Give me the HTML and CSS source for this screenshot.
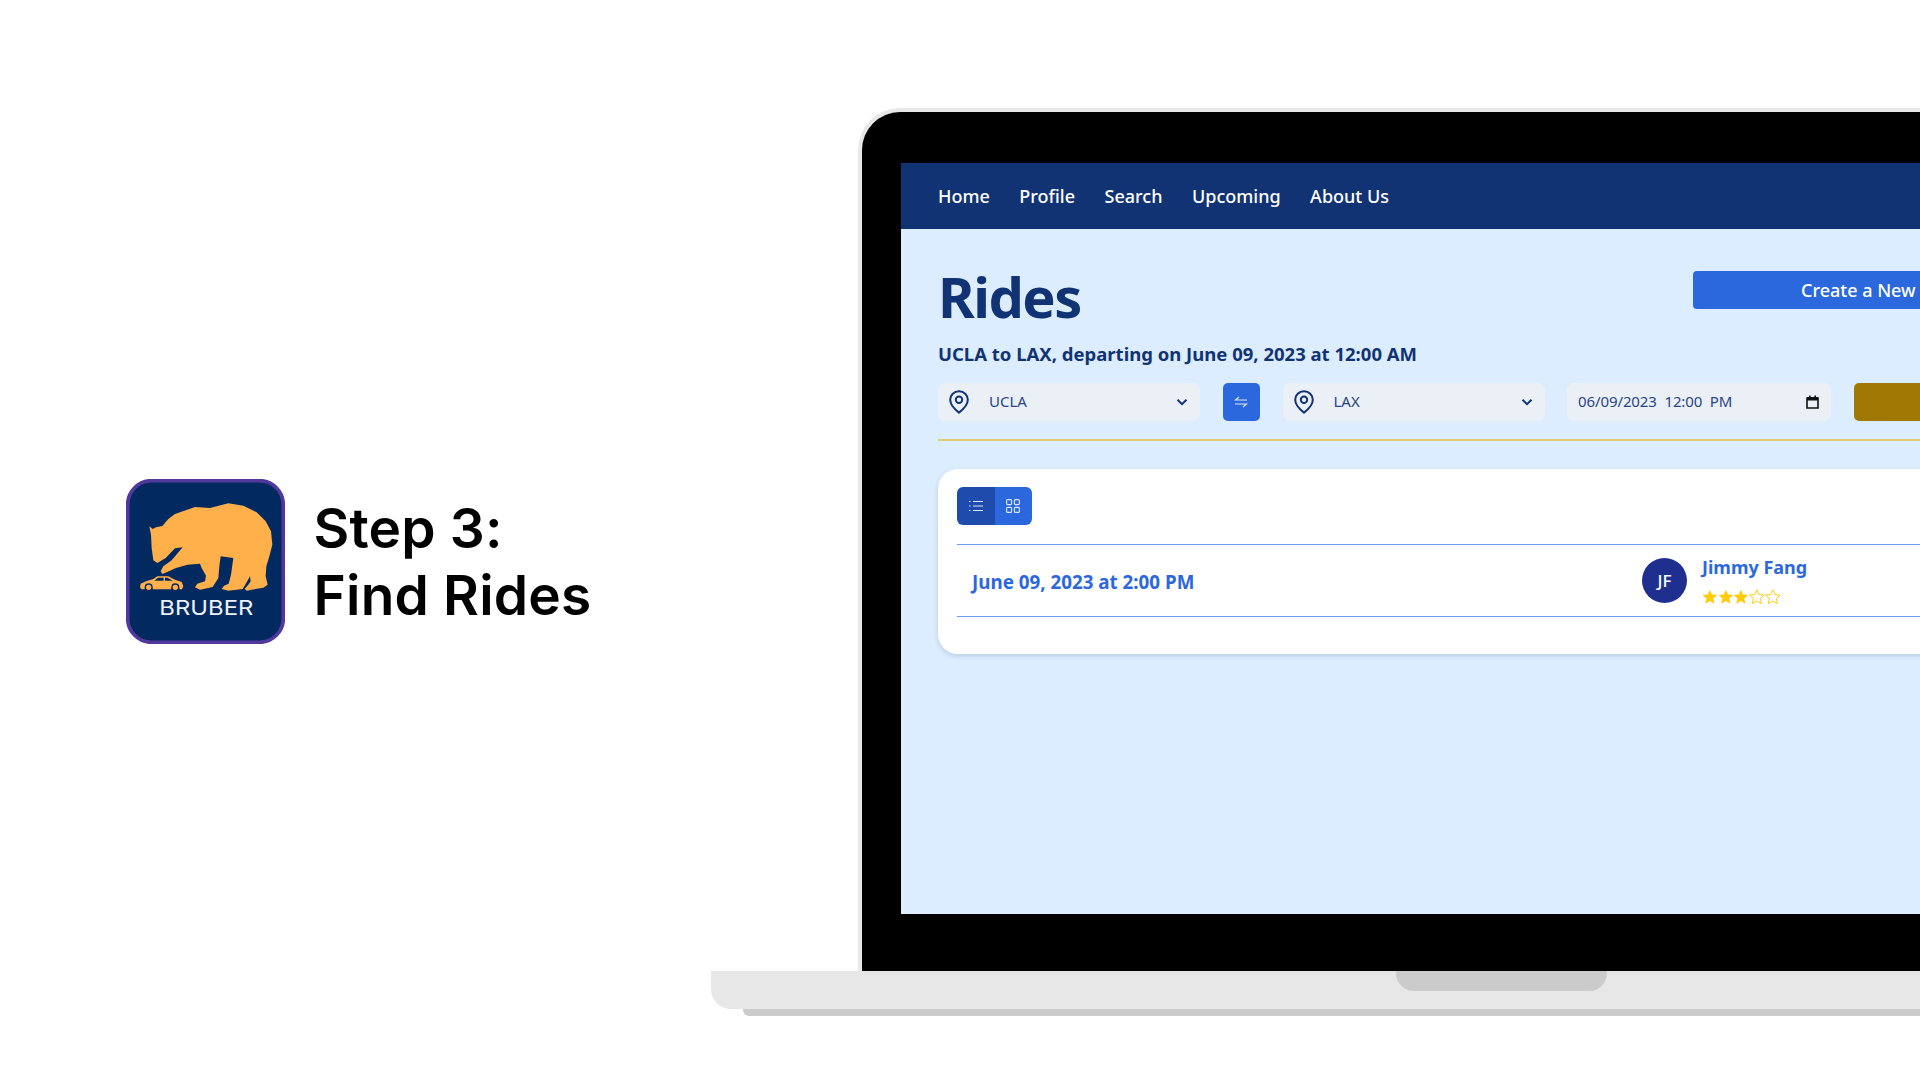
FILE: index.html
```html
<!DOCTYPE html>
<html lang="en">
<head>
<meta charset="utf-8">
<title>Bruber - Step 3</title>
<link rel="stylesheet" href="styles.css">
</head>
<body>
<svg class="defs" width="0" height="0" aria-hidden="true">
  <symbol id="pin" viewBox="0 0 20 24"><path d="M10 1.200C5 1.200 1.200 5 1.200 9.800c0 5.400 4.600 9.600 8.800 12.800 4.200-3.200 8.800-7.400 8.800-12.800C18.800 5 15 1.200 10 1.200z" fill="none" stroke="currentColor" stroke-width="2"/><circle cx="10" cy="9.800" r="3.200" fill="none" stroke="currentColor" stroke-width="2"/></symbol>
  <symbol id="chev" viewBox="0 0 12 8"><path d="M1.500 1.800 6 6.200l4.500-4.400" fill="none" stroke="currentColor" stroke-width="2"/></symbol>
  <symbol id="star" viewBox="0 0 16 16"><path d="M8 .6l2.200 4.900 5.300.5-4 3.600 1.200 5.200L8 12.100l-4.700 2.700 1.200-5.200-4-3.600 5.300-.5z"/></symbol>
</svg>
<section class="intro">
  <svg class="logo" viewBox="78 88 477 495" role="img" aria-label="Bruber logo">
    <rect x="83" y="93" width="467" height="485" rx="72" fill="#022a60" stroke="#51389c" stroke-width="11"/>
    <path fill="#ffb04a" d="M148 230L158 238L168 233L187 229L205 208L225 193L285 172L330 175L385 161L430 168L470 188L497 215L513 245L517 285L508 320L499 350L497 380L503 405L490 414L440 423L434 417L445 405L452 395L450 380L440 398L428 418L385 423L365 418L372 408L386 402L393 375L400 325L362 320L358 350L355 385L338 412L300 420L285 413L292 402L315 395L318 378L305 355L300 342L262 345L228 355L200 368L187 373L182 365L190 350L215 332L248 293L225 296L197 325L172 340L160 332L155 295L153 255Z"/>
    <path fill="#ffb04a" d="M120 412L122 402L140 394L160 388L172 380H205L225 390L245 397L250 410L246 419H238A12 12 0 0 0 214 419H158A12 12 0 0 0 134 419H124Z"/>
    <path fill="#022a60" d="M163 393L174 384H191V393ZM195 384H203L218 393H195Z"/>
    <g fill="#ffb04a" stroke="#022a60" stroke-width="4"><circle cx="146" cy="413" r="10"/><circle cx="226" cy="413" r="10"/></g>
    <text class="logo-text" x="319" y="495" text-anchor="middle" textLength="282" lengthAdjust="spacingAndGlyphs">BRUBER</text>
  </svg>
  <h2 class="step">Step 3:<br>Find Rides</h2>
</section>
<section class="laptop">
  <div class="lid">
    <div class="screen">
      <nav class="nav"><a>Home</a><a>Profile</a><a>Search</a><a>Upcoming</a><a>About Us</a></nav>
      <main class="content">
        <div class="head">
          <h1 class="title">Rides</h1>
          <button class="create">Create a New Ride</button>
        </div>
        <p class="sub">UCLA to LAX, departing on June 09, 2023 at 12:00 AM</p>
        <div class="filters">
          <div class="field select"><svg class="pin"><use href="#pin"/></svg><span class="val">UCLA</span><svg class="chev"><use href="#chev"/></svg></div>
          <button class="swap" aria-label="Swap"><svg width="14" height="12" viewBox="0 0 14 12"><path d="M13 4H1.500L5 1M1 8h11.500L9 11" fill="none" stroke="#dbe7fb" stroke-width="1.200"/></svg></button>
          <div class="field select"><svg class="pin"><use href="#pin"/></svg><span class="val">LAX</span><svg class="chev"><use href="#chev"/></svg></div>
          <div class="field date"><span class="dval">06/09/2023&nbsp; 12:00&nbsp; PM</span><svg class="cal" width="13" height="14" viewBox="0 0 13 14"><path d="M1 3h11v10H1z" fill="none" stroke="#111" stroke-width="1.600"/><path d="M1 2h11v3.500H1zM3 .5h1.600V3H3zM8.400.5H10V3H8.400z" fill="#111"/></svg></div>
          <button class="go" aria-label="Search"></button>
        </div>
        <div class="card">
          <div class="toggle">
            <button class="tbtn on" aria-label="List"><svg width="14" height="12" viewBox="0 0 14 12"><path d="M4 1.500h10M4 6h10M4 10.500h10M0 1.500h1.500M0 6h1.500M0 10.500h1.500" stroke="#dbe7fb" stroke-width="1.200" fill="none"/></svg></button>
            <button class="tbtn" aria-label="Grid"><svg width="14" height="14" viewBox="0 0 14 14"><g fill="none" stroke="#dbe7fb" stroke-width="1.100"><rect x=".6" y=".6" width="5" height="5" rx="1"/><rect x="8.400" y=".6" width="5" height="5" rx="1"/><rect x=".6" y="8.400" width="5" height="5" rx="1"/><rect x="8.400" y="8.400" width="5" height="5" rx="1"/></g></svg></button>
          </div>
          <div class="ride">
            <div class="when">June 09, 2023 at 2:00 PM</div>
            <div class="driver">
              <div class="avatar">JF</div>
              <div class="who">
                <div class="name">Jimmy Fang</div>
                <div class="stars">
                  <svg class="star"><use href="#star"/></svg><svg class="star"><use href="#star"/></svg><svg class="star"><use href="#star"/></svg><svg class="star off"><use href="#star"/></svg><svg class="star off"><use href="#star"/></svg>
                </div>
              </div>
            </div>
          </div>
        </div>
      </main>
    </div>
  </div>
  <div class="base"><div class="notch"></div></div>
  <div class="foot"></div>
</section>
</body>
</html>
```
FILE: styles.css
```css
* { box-sizing: border-box; }
html, body { margin: 0; padding: 0; }
body {
  width: 1920px;
  height: 1080px;
  overflow: hidden;
  background: #fff;
  display: flex;
  font-family: "Noto Sans", "Open Sans", sans-serif;
}
.defs { position: absolute; }
button { border: 0; padding: 0; font: inherit; }

.intro {
  flex: 0 0 711px;
  height: 1080px;
  padding: 43px 0 0 126px;
  display: flex;
  align-items: center;
  gap: 28.500px;
}
.logo { width: 159px; height: 165px; flex: none; }
.logo-text { font-family: "Inter", sans-serif; font-size: 62px; font-weight: 400; fill: #eef2f8; }
.step {
  margin: 0;
  font-family: "Inter", sans-serif;
  font-size: 55px;
  line-height: 67px;
  font-weight: 600;
  letter-spacing: 0.2px;
  color: #000;
  white-space: nowrap;
}

.laptop { flex: 0 0 1400px; padding-top: 108px; display: flex; flex-direction: column; }
.lid {
  margin-left: 147px;
  height: 863px;
  background: #000;
  border: 4px solid #e8e8e8;
  border-width: 4px 0 0 4px;
  border-top-left-radius: 42px;
  padding: 51px 0 0 39px;
}
.screen { width: 1202px; height: 751px; background: #dbedfe; display: flex; flex-direction: column; }
.nav {
  height: 66px;
  flex: none;
  background: #123373;
  padding-left: 37px;
  display: flex;
  align-items: center;
  gap: 29.500px;
  color: #fff;
  font-size: 18px;
  font-weight: 500;
}
.content { padding: 31px 37px 0; flex: 1; }
.head { display: flex; justify-content: space-between; align-items: flex-start; height: 73px; }
.title { margin: 0; font-size: 56px; line-height: 72px; font-weight: 700; color: #123373; letter-spacing: -1.500px; }
.create {
  width: 373px;
  height: 38px;
  margin-top: 11px;
  border-radius: 4px;
  background: #2c68dd;
  color: #fff;
  font-size: 18px;
  font-weight: 500;
}
.sub { margin: 7px 0 0; font-size: 18.500px; line-height: 28px; font-weight: 700; color: #123373; white-space: nowrap; }
.filters {
  margin-top: 15px;
  height: 58px;
  border-bottom: 2px solid #e2cb6d;
  display: flex;
  gap: 22.500px;
  align-items: flex-start;
}
.field {
  height: 38px;
  background: #ebf0f6;
  border-radius: 7px;
  display: flex;
  align-items: center;
  color: #2a4585;
  font-size: 15px;
  line-height: 36px;
  padding-bottom: 2px;
  flex: none;
}
.select { width: 262px; padding: 0 12px 0 11px; }
.pin { width: 20px; height: 24px; color: #123373; flex: none; }
.val { margin-left: 20px; flex: 1; position: relative; top: -1px; }
.chev { width: 12px; height: 8px; color: #123373; flex: none; }
.swap { width: 37.500px; height: 38px; border-radius: 5px; background: #2c68dd; flex: none; display: flex; align-items: center; justify-content: center; }
.date { width: 264px; padding: 0 12px 0 11px; justify-content: space-between; }
.dval { white-space: nowrap; letter-spacing: -0.1px; position: relative; top: -1px; }
.go { width: 212px; height: 38px; border-radius: 5px; background: #a27805; flex: none; }
.cal { flex: none; }

.card {
  margin-top: 28px;
  height: 185px;
  background: #fff;
  border-radius: 20px;
  padding: 18px 19px 0;
  box-shadow: 0 2px 5px rgba(60, 80, 120, .2);
}
.toggle { display: flex; width: 75px; height: 38px; border-radius: 6px; overflow: hidden; }
.tbtn { flex: 1; background: #2c68dd; display: flex; align-items: center; justify-content: center; }
.tbtn.on { background: #1e4bac; }
.ride {
  margin-top: 19px;
  height: 73px;
  border-top: 1.500px solid #6b9bf0;
  border-bottom: 1.500px solid #6b9bf0;
  padding-left: 15px;
  display: grid;
  grid-template-columns: 670px 1fr;
  align-items: center;
}
.when { font-size: 18.800px; font-weight: 700; color: #2c68dd; white-space: nowrap; position: relative; top: 1px; }
.driver { display: flex; align-items: center; gap: 15px; }
.avatar {
  width: 45px;
  height: 45px;
  border-radius: 50%;
  background: #1e2f8f;
  color: #fff;
  font-size: 17px;
  font-weight: 500;
  display: flex;
  align-items: center;
  justify-content: center;
}
.who { display: flex; flex-direction: column; gap: 11px; }
.name { font-size: 18px; line-height: 22px; font-weight: 700; color: #2c68dd; white-space: nowrap; }
.stars { display: flex; height: 16px; }
.star { width: 15.700px; height: 16px; fill: #fdcc0d; }
.star.off { fill: none; stroke: #fdcc0d; stroke-width: 1; }

.base {
  position: relative;
  height: 38px;
  background: #e7e7e7;
  border-bottom-left-radius: 20px;
}
.notch {
  position: absolute;
  left: 685px;
  top: 0;
  width: 211px;
  height: 20px;
  background: #cbcbcb;
  border-radius: 0 0 18px 18px;
}
.foot { margin-left: 32px; height: 7px; background: #cbcbcb; border-bottom-left-radius: 6px; }
```
